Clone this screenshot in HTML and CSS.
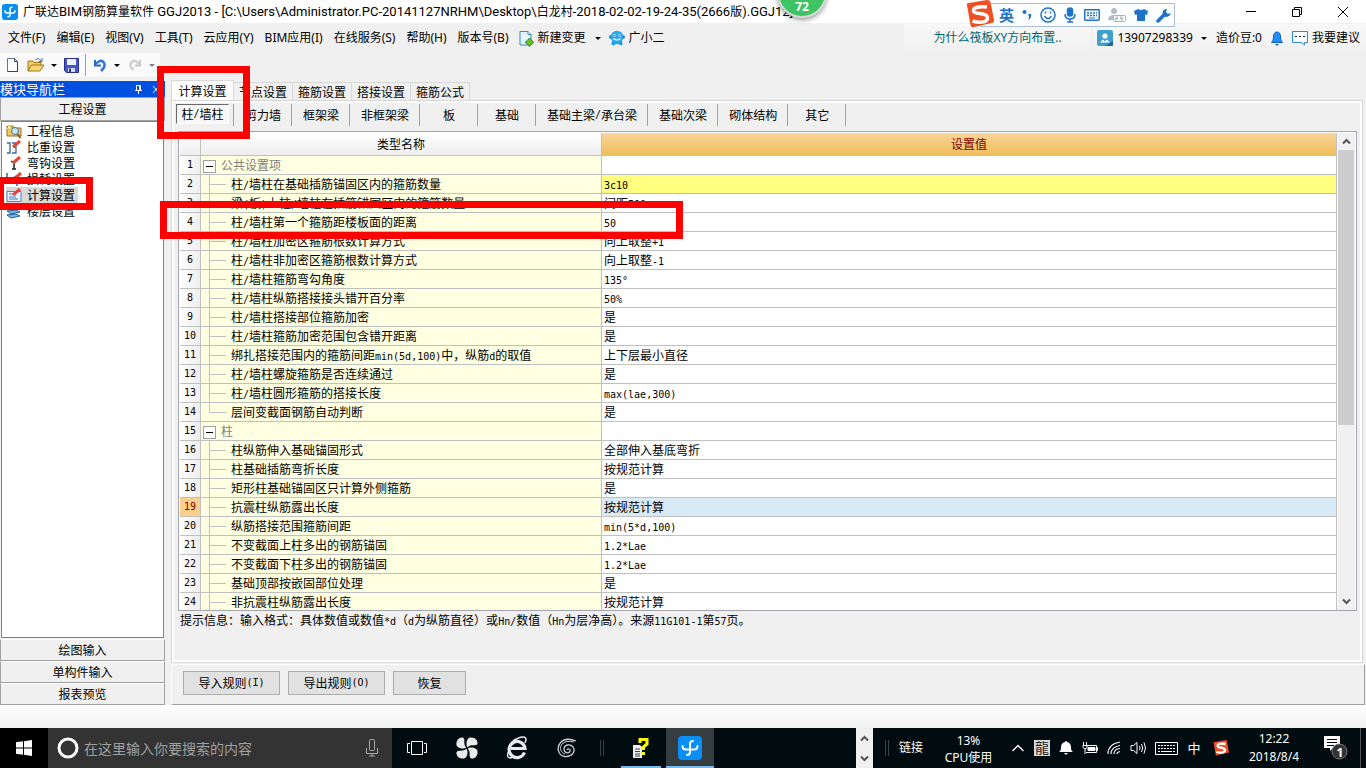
FILE: index.html
```html
<!DOCTYPE html>
<html lang="zh-CN">
<head>
<meta charset="utf-8">
<title>广联达BIM钢筋算量软件 GGJ2013</title>
<link rel="stylesheet" href="styles.css">
</head>
<body>
<header class="titlebar">
  <svg class="app-logo" width="16" height="16" viewBox="0 0 24 24"><rect width="24" height="24" rx="4" fill="#0a8ff0"/><path d="M15 5q-3 0-3 3v8q0 3-3 3M4.500 10q0 3.500 3.500 3.500h8q3.500 0 3.500-3.500" fill="none" stroke="#fff" stroke-width="2.200" stroke-linecap="round"/></svg>
  <h1 class="title-text">广联达<span>BIM</span>钢筋算量软件<span> GGJ2013 - [C:\Users\Administrator.PC-20141127NRHM\Desktop\</span>白龙村<span>-2018-02-02-19-24-35(2666</span>版<span>).GGJ12]</span></h1>
  <div class="window-buttons">
    <button aria-label="最小化"><svg width="12" height="12"><path d="M1 5.500h10" stroke="#000"/></svg></button>
    <button aria-label="还原"><svg width="12" height="12" fill="none" stroke="#000"><path d="M1.500 3.500h7v7h-7zM3.500 3.500v-2h7v7h-2"/></svg></button>
    <button aria-label="关闭"><svg width="12" height="12"><path d="M1 1l10 10M11 1L1 11" stroke="#000"/></svg></button>
  </div>
</header>

<div class="menubar">
  <nav class="menus">
    <button>文件(F)</button><button>编辑(E)</button><button>视图(V)</button><button>工具(T)</button><button>云应用(Y)</button><button>BIM应用(I)</button><button>在线服务(S)</button><button>帮助(H)</button><button>版本号(B)</button>
  </nav>
  <button class="menu-extra change"><svg width="15" height="17" viewBox="0 0 15 17"><path d="M1 1.500h8l3 3V15H1z" fill="#e4f2fc" stroke="#4287b5"/><path d="M9 1.500v3h3" fill="#fff" stroke="#4287b5"/><path d="M10.500 8l2 2.300 2.300 2-2.300 2-2 2.300-2-2.300-2.300-2 2.300-2z" fill="#63c22c" stroke="#2e8b16"/></svg>新建变更<i class="caret"></i></button>
  <button class="menu-extra"><svg width="16" height="16" viewBox="0 0 16 16"><circle cx="1.800" cy="7" r="1.800" fill="#1479bd"/><circle cx="14.200" cy="7" r="1.800" fill="#1479bd"/><path d="M3 10l-.5 5h3l1-1h3l1 1h3l-.5-5z" fill="#189be0"/><circle cx="8" cy="7" r="6.300" fill="#27a9ef"/><circle cx="5.700" cy="5.500" r="1.300" fill="#fff"/><circle cx="10.300" cy="5.500" r="1.300" fill="#fff"/><circle cx="5.900" cy="5.600" r=".6"/><circle cx="10.100" cy="5.600" r=".6"/><path d="M4.500 8.500q3.500 3 7 0" fill="none" stroke="#fff" stroke-width="1.200"/></svg>广小二</button>
  <a class="tip-link" href="#">为什么筏板XY方向布置..</a>
  <div class="account">
    <svg width="16" height="16" viewBox="0 0 16 16"><rect width="16" height="16" rx="2" fill="#3f9fcf"/><path d="M8 16l8-5v5z" fill="#24688e"/><circle cx="8" cy="6" r="2.600" fill="#fff"/><path d="M3 12.500l3-3 2 2 2-2 3 3z" fill="#fff"/></svg>
    <button class="phone">13907298339<i class="caret"></i></button>
    <span class="beans">造价豆:0</span>
    <button aria-label="通知" class="bell"><svg width="12" height="15" viewBox="0 0 12 15"><path d="M6 1C3.500 1 2.500 3 2.500 6c0 3-1 4-2 5.500h11C10.500 10 9.500 9 9.500 6 9.500 3 8.500 1 6 1z" fill="#1e90ff" stroke="#1460c0"/><path d="M4 13h4l-2 2z" fill="#1460c0"/></svg></button>
    <button class="suggest"><svg width="16" height="16" viewBox="0 0 16 16" fill="none" stroke="#2f86d8"><path d="M.5 1.500h15v11h-3v2.500l-3-2.500h-9z" fill="#f8fcff"/><path d="M3 6.500h2M7 6.500h2M11 6.500h2" stroke="#123"/></svg>我要建议</button>
  </div>
</div>

<div class="toolbar">
  <button aria-label="新建"><svg width="14" height="16" viewBox="0 0 14 16"><path d="M1.500 1.500h7l3 3v10h-10z" fill="#fdfdff" stroke="#60758c"/><path d="M8.500 1.500v3h3M11.500 5v9.500h-10" fill="none" stroke="#2d4562"/></svg></button>
  <button aria-label="打开" class="open"><svg width="18" height="16" viewBox="0 0 18 16"><path d="M1 14V4h5l1 1.500h7V8" fill="#f0cb62" stroke="#a4771d"/><path d="M1 14L4.500 8H17l-4 6z" fill="#f8d772" stroke="#a4771d"/><path d="M8 3q4-3 6 1m1-3v3.500h-3.500" fill="none" stroke="#47719e"/></svg><i class="caret"></i></button>
  <button aria-label="保存" class="save"><svg width="15" height="15" viewBox="0 0 15 15"><path d="M.5.5h14v14h-12l-2-2z" fill="#4656c7" stroke="#26328a"/><path d="M3 1h9v6H3z" fill="#eaf2ff"/><path d="M4 10h7v4H4z" fill="#d6d8e5"/><path d="M5 10.500h2V14H5z" fill="#29357f"/></svg></button>
  <button aria-label="撤销" class="undo"><svg width="14" height="15" viewBox="0 0 14 15"><path d="M2 2v5.500h6" fill="none" stroke="#2868bd" stroke-width="2"/><path d="M3 6q4-5 7.500-2 3 4-2.500 9" fill="none" stroke="#3478d2" stroke-width="2.500"/></svg><i class="caret"></i></button>
  <button aria-label="重做" class="redo" disabled><svg width="14" height="15" viewBox="0 0 14 15"><path d="M12 2v5.500H7" fill="none" stroke="#c5c8cb" stroke-width="2"/><path d="M11 6Q7 1 3.500 4q-3 4 2 8" fill="none" stroke="#cfd1d4" stroke-width="2.500"/></svg><i class="caret"></i></button>
</div>

<div class="workspace">
  <aside class="sidebar">
    <div class="side-title"><span>模块导航栏</span>
      <button aria-label="固定"><svg width="9" height="11" fill="none" stroke="#fff"><path d="M2.500 6V1.500h4V6M5.500 1v5M1 6.500h7M4.500 7v3"/></svg></button>
      <button aria-label="关闭"><svg width="8" height="9" stroke="#fff"><path d="M1 1l6 7M7 1L1 8"/></svg></button>
    </div>
    <button class="side-tab">工程设置</button>
    <ul class="side-list">
      <li><button><svg width="16" height="15" viewBox="0 0 16 15"><path d="M1 2h6v2h8v8H1z" fill="#edc75f" stroke="#94702a"/><circle cx="9" cy="7" r="3.500" fill="#c4e5fa" stroke="#51708b"/><path d="M11.500 10l3 4" stroke="#8c5818" stroke-width="2"/><path d="M1 1l4 4M5 1L1 5" stroke="#fff48a"/></svg><span>工程信息</span></button></li>
      <li><button><svg width="16" height="15" viewBox="0 0 16 15" fill="none"><path d="M1 3h3v10H1M6 3h4v4H7h3v6H6" stroke="#3566a5" stroke-width="1.300"/><path d="M7 7l7-6" stroke="#e64532" stroke-width="3"/></svg><span>比重设置</span></button></li>
      <li><button><svg width="16" height="15" viewBox="0 0 16 15" fill="none"><path d="M6 13h4M8 13V7L5 5" stroke="#222" stroke-width="1.500"/><path d="M7 7l7-6" stroke="#e64532" stroke-width="3"/></svg><span>弯钩设置</span></button></li>
      <li><button><svg width="16" height="15" viewBox="0 0 16 15" fill="none"><path d="M1 1v8h3l6-5M11 7v7" stroke="#3566a5" stroke-width="1.500"/><path d="M8 7l7-6" stroke="#e64532" stroke-width="3"/></svg><span>损耗设置</span></button></li>
      <li class="selected"><button><svg width="16" height="15" viewBox="0 0 16 15" fill="none"><path d="M1 3.500h14v10H1z" fill="#e8f2ff" stroke="#5a83b7"/><path d="M3 6h3M3 9h7M3 11h9" stroke="#4778bc"/><path d="M7 7l7-6" stroke="#e64532" stroke-width="3"/></svg><span>计算设置</span></button></li>
      <li><button><svg width="16" height="15" viewBox="0 0 16 15" fill="#78b8e6" stroke="#235f8f"><path d="M1 3l9-1 4 2-9 2zM1 7l9-1 4 2-9 2zM1 11l9-1 4 2-9 2z"/></svg><span>楼层设置</span></button></li>
    </ul>
    <button class="side-tab">绘图输入</button>
    <button class="side-tab">单构件输入</button>
    <button class="side-tab">报表预览</button>
  </aside>

  <main class="content">
    <div class="tabs" role="tablist">
      <button role="tab" class="active" aria-selected="true">计算设置</button><button role="tab">节点设置</button><button role="tab">箍筋设置</button><button role="tab">搭接设置</button><button role="tab">箍筋公式</button>
    </div>
    <section class="page">
      <div class="subtabs">
        <div><button class="pressed">柱<span class="hw">/</span>墙柱</button></div><div><button>剪力墙</button></div><div><button>框架梁</button></div><div><button>非框架梁</button></div><div><button>板</button></div><div><button>基础</button></div><div><button>基础主梁<span class="hw">/</span>承台梁</button></div><div><button>基础次梁</button></div><div><button>砌体结构</button></div><div><button>其它</button></div>
      </div>
      <div class="grid">
        <div class="grid-view">
          <table>
            <colgroup><col class="c-num"><col class="c-name"><col></colgroup>
            <thead><tr><th></th><th>类型名称</th><th class="hot">设置值</th></tr></thead>
            <tbody>
              <tr><th>1</th><td class="group"><button aria-label="折叠"></button>公共设置项</td><td></td></tr>
              <tr class="changed"><th>2</th><td>柱<span class="hw">/</span>墙柱在基础插筋锚固区内的箍筋数量</td><td><span class="hw">3c10</span></td></tr>
              <tr><th>3</th><td>梁<span class="hw">(</span>板<span class="hw">)</span>上柱<span class="hw">/</span>墙柱在插筋锚固区内的箍筋数量</td><td>间距<span class="hw">500</span></td></tr>
              <tr><th>4</th><td>柱<span class="hw">/</span>墙柱第一个箍筋距楼板面的距离</td><td><span class="hw">50</span></td></tr>
              <tr><th>5</th><td>柱<span class="hw">/</span>墙柱加密区箍筋根数计算方式</td><td>向上取整<span class="hw">+1</span></td></tr>
              <tr><th>6</th><td>柱<span class="hw">/</span>墙柱非加密区箍筋根数计算方式</td><td>向上取整<span class="hw">-1</span></td></tr>
              <tr><th>7</th><td>柱<span class="hw">/</span>墙柱箍筋弯勾角度</td><td><span class="hw">135°</span></td></tr>
              <tr><th>8</th><td>柱<span class="hw">/</span>墙柱纵筋搭接接头错开百分率</td><td><span class="hw">50%</span></td></tr>
              <tr><th>9</th><td>柱<span class="hw">/</span>墙柱搭接部位箍筋加密</td><td>是</td></tr>
              <tr><th>10</th><td>柱<span class="hw">/</span>墙柱箍筋加密范围包含错开距离</td><td>是</td></tr>
              <tr><th>11</th><td>绑扎搭接范围内的箍筋间距<span class="hw">min(5d,100)</span>中，纵筋<span class="hw">d</span>的取值</td><td>上下层最小直径</td></tr>
              <tr><th>12</th><td>柱<span class="hw">/</span>墙柱螺旋箍筋是否连续通过</td><td>是</td></tr>
              <tr><th>13</th><td>柱<span class="hw">/</span>墙柱圆形箍筋的搭接长度</td><td><span class="hw">max(lae,300)</span></td></tr>
              <tr><th>14</th><td class="last">层间变截面钢筋自动判断</td><td>是</td></tr>
              <tr><th>15</th><td class="group"><button aria-label="折叠"></button>柱</td><td></td></tr>
              <tr><th>16</th><td>柱纵筋伸入基础锚固形式</td><td>全部伸入基底弯折</td></tr>
              <tr><th>17</th><td>柱基础插筋弯折长度</td><td>按规范计算</td></tr>
              <tr><th>18</th><td>矩形柱基础锚固区只计算外侧箍筋</td><td>是</td></tr>
              <tr class="current"><th>19</th><td>抗震柱纵筋露出长度</td><td>按规范计算</td></tr>
              <tr><th>20</th><td>纵筋搭接范围箍筋间距</td><td><span class="hw">min(5*d,100)</span></td></tr>
              <tr><th>21</th><td>不变截面上柱多出的钢筋锚固</td><td><span class="hw">1.2*Lae</span></td></tr>
              <tr><th>22</th><td>不变截面下柱多出的钢筋锚固</td><td><span class="hw">1.2*Lae</span></td></tr>
              <tr><th>23</th><td>基础顶部按嵌固部位处理</td><td>是</td></tr>
              <tr><th>24</th><td>非抗震柱纵筋露出长度</td><td>按规范计算</td></tr>
            </tbody>
          </table>
        </div>
        <div class="scrollbar">
          <button aria-label="向上滚动"><svg width="9" height="7"><path d="M1 5.500l3.500-3.500 3.500 3.500" fill="none" stroke="#555" stroke-width="2"/></svg></button>
          <div class="track"><div class="thumb"></div></div>
          <button aria-label="向下滚动"><svg width="9" height="7"><path d="M1 1.500l3.500 3.500 3.500-3.500" fill="none" stroke="#555" stroke-width="2"/></svg></button>
        </div>
      </div>
      <p class="hint">提示信息：输入格式：具体数值或数值<span class="hw">*d</span>（<span class="hw">d</span>为纵筋直径）或<span class="hw">Hn/</span>数值（<span class="hw">Hn</span>为层净高）。来源<span class="hw">11G101-1</span>第<span class="hw">57</span>页。</p>
    </section>
    <div class="actions">
      <button>导入规则<span class="hw">(I)</span></button><button>导出规则<span class="hw">(O)</span></button><button class="small">恢复</button>
    </div>
  </main>
</div>
<div class="statusbar"></div>

<footer class="taskbar">
  <button class="start" aria-label="开始"><svg width="16" height="16" fill="#fff"><path d="M0 2.300l7-1v6.200H0zM8 1.200L16 0v7.500H8zM0 8.500h7v6.200l-7-1zM8 8.500h8V16l-8-1.200z"/></svg></button>
  <label class="search">
    <svg width="22" height="22"><circle cx="11" cy="11" r="9" fill="none" stroke="#fff" stroke-width="3"/></svg>
    <input type="text" aria-label="搜索" placeholder="在这里输入你要搜索的内容">
    <svg width="12" height="18" fill="none" stroke="#aaa"><rect x="3.500" y=".5" width="5" height="11" rx="1"/><path d="M.5 9v5.500h11V9M6 14.500V17M3 17h6"/></svg>
  </label>
  <div class="apps">
    <button aria-label="任务视图"><svg width="20" height="16" fill="none" stroke="#fff"><path d="M4.500 1.500h11v13h-11zM3 3.500H.5v9H3M17 3.500h2.500v9H17"/></svg></button>
    <button aria-label="风车"><svg width="22" height="22" viewBox="-11 -11 22 22" fill="#e8eced"><path d="M.5-.8C-1.500-3-.5-10 3-10.500 8-11 11-8 10.500-4 8-1 5-4.500.5-.8z"/><path d="M.5-.8C-1.500-3-.5-10 3-10.500 8-11 11-8 10.500-4 8-1 5-4.500.5-.8z" transform="rotate(90)"/><path d="M.5-.8C-1.500-3-.5-10 3-10.500 8-11 11-8 10.500-4 8-1 5-4.500.5-.8z" transform="rotate(180)"/><path d="M.5-.8C-1.500-3-.5-10 3-10.500 8-11 11-8 10.500-4 8-1 5-4.500.5-.8z" transform="rotate(270)"/></svg></button>
    <button aria-label="浏览器"><svg width="22" height="24" viewBox="0 0 22 24" fill="none" stroke="#e8eced"><path d="M18.500 16.500A8 8 0 1 1 19 12.500H5" stroke-width="3.200"/><path d="M5 7C11 1 19-1 20 3q0 2-1 4M4 13C0 19 1 24 7 21" stroke-width="1.500"/></svg></button>
    <button aria-label="应用"><svg width="20" height="20" viewBox="0 0 20 20" fill="none" stroke="#c8cfd1"><path d="M19 3Q9-1 4 4C-1 9 1 18 8 18.500c7 .5 11-5 8-9.500-3-4-9-2-9 2s5 5 6 2c.5-2-2-3-3-1" stroke-width="1.300"/><path d="M17 4Q9 2 5 6c-3 4-1 9 3 10"/></svg></button>
  </div>
  <i class="handle"></i>
  <button class="task running" aria-label="帮助"><svg width="18" height="22" viewBox="0 0 18 22"><path d="M8 6V2.500h7V7l-3.500 3v3" fill="none" stroke="#ff0" stroke-width="3"/><path d="M10 15h3v3h-3z" fill="#ff0"/><path d="M1 8h7l2 2v11H1z" fill="#eee"/><path d="M3 12h5M3 14.500h5M3 17h5M3 19h5" stroke="#444"/></svg></button>
  <button class="task active" aria-label="广联达"><svg width="24" height="24" viewBox="0 0 24 24"><rect width="24" height="24" rx="4" fill="#0a8ff8"/><path d="M15 5q-3 0-3 3v8q0 3-3 3M4.500 10q0 3.500 3.500 3.500h8q3.500 0 3.500-3.500" fill="none" stroke="#fff" stroke-width="2" stroke-linecap="round"/></svg></button>
  <div class="task-scroll"><button aria-label="上"><svg width="9" height="7"><path d="M1 5.500l3.500-3.500 3.500 3.500" fill="none" stroke="#555" stroke-width="2"/></svg></button><button aria-label="下"><svg width="9" height="7"><path d="M1 1.500l3.500 3.500 3.500-3.500" fill="none" stroke="#555" stroke-width="2"/></svg></button></div>
  <i class="handle right"></i>
  <span class="links">链接</span>
  <div class="cpu">13%<br>CPU使用</div>
  <div class="tray">
    <button aria-label="展开"><svg width="12" height="8"><path d="M.5 7L6 1.500 11.500 7" fill="none" stroke="#fff" stroke-width="1.300"/></svg></button>
    <button><span class="dragon">龍</span></button>
    <button aria-label="提醒"><svg width="14" height="14" fill="#fff"><path d="M7 0a1 1 0 0 1 1 1c3 .5 4 3 4 5 0 3 .5 4 2 5H0c1.500-1 2-2 2-5 0-2 1-4.500 4-5a1 1 0 0 1 1-1zM5 12h4l-2 2z"/></svg></button>
    <button aria-label="电源"><svg width="16" height="13" fill="none" stroke="#fff"><path d="M5 3.500h9.500v7H4M14.500 5.500h1v3h-1M1.500 0v3M4.500 0v3M1 3.500h4v2L3 7 1 5.500zM3 7v5"/><path d="M6 5.500h7v3H6z" fill="#fff"/></svg></button>
    <button aria-label="网络"><svg width="14" height="14" fill="none" stroke="#e8eced"><path d="M1 13Q1 3 13 1M4 13Q4 6 13 4.500M7 13q0-5 6-5.500M10 13q0-2 3-2.500" stroke-width="1.200"/></svg></button>
    <button aria-label="音量"><svg width="17" height="14" fill="none" stroke="#fff"><path d="M1 4.500h2.500L7 1.500v11L3.500 9.500H1zM9.500 5q1 2 0 4M11.500 3q2.500 4 0 8M14 1.500q3 5.500 0 11"/></svg></button>
    <button aria-label="键盘" class="wide"><svg width="23" height="13" fill="none" stroke="#fff"><path d="M.5.500h22v12H.5z"/><path d="M3 3.500h17M3 6.500h17" stroke-dasharray="2 1"/><path d="M3 9.500h2M6 9.500h11M18 9.500h2"/></svg></button>
    <button class="ime">中</button>
    <button aria-label="搜狗" class="sogou"><svg width="16" height="16" viewBox="0 0 28 28"><path d="M1 4L24 0l4 22-23 5z" fill="#f04e23"/><path d="M22 7Q8 5 8 10c0 5 13 2 13 8 0 5-9 5-15 3" fill="none" stroke="#fff" stroke-width="4"/></svg></button>
  </div>
  <div class="clock">12:22<br>2018/8/4</div>
  <button class="notify" aria-label="通知"><svg width="24" height="26" viewBox="0 0 24 26"><path d="M0 1h16v12H9l-3 3v-3H0z" fill="#fff"/><path d="M3 4.500h10M3 7.500h10M3 10.500h7" stroke="#000"/><circle cx="15.500" cy="16.500" r="7.500" fill="#333" stroke="#777"/></svg><b>1</b></button>
</footer>

<div class="speed-ball">72</div>
<div class="ime-bar">
  <svg class="ime-logo" width="28" height="28" viewBox="0 0 28 28"><path d="M1 5Q0 3 3 3L21 0q3 0 3.500 2L28 20q0 3-2 3L8 27q-3 1-3.500-2z" fill="#f04e23"/><path d="M21 7Q7 6 7.500 11c.5 4 14 1 14 7 0 5-9 5-15 3" fill="none" stroke="#fff" stroke-width="3.500"/></svg>
  <b>英</b>
  <svg width="10" height="14" fill="#1e73c8"><circle cx="2.500" cy="4" r="2"/><path d="M6 6h3q1 4-3 6 2-3 0-6z"/></svg>
  <svg width="16" height="16" fill="none" stroke="#1e73c8" stroke-width="1.500"><circle cx="8" cy="8" r="7"/><path d="M4.500 9q3.500 5 7 0M5.500 4.500v2M10.500 4.500v2"/></svg>
  <svg width="12" height="16" fill="none" stroke="#1e73c8" stroke-width="1.500"><rect x="3.500" y="1" width="5" height="8" rx="2.500" fill="#1e73c8"/><path d="M1 7q0 5 5 5t5-5M6 12v3M3 15h6"/></svg>
  <svg width="16" height="12" fill="none" stroke="#1e73c8"><rect x=".7" y=".7" width="14.500" height="10.500" rx="1" stroke-width="1.500"/><path d="M3 4h10M3 6.500h10" stroke-width="1.500" stroke-dasharray="2 1"/><path d="M5 9h6"/></svg>
  <svg width="18" height="16" fill="#b3bccb"><circle cx="6" cy="4" r="3"/><path d="M0 13q0-5 6-5l4 1v4z"/><rect x="5.500" y="8.500" width="12" height="6" rx="1" fill="#fff" stroke="#a7b2c3"/><path d="M7.500 10h2v1.500h-2v1.500h2M14.500 10h-2v1.500h2v1.500h-2" fill="none" stroke="#a7b2c3"/></svg>
  <svg width="14" height="14" fill="#1e73c8"><path d="M4 1q3 2 6 0l4 2-1 4-2-.5V13H3V6.500L1 7 0 3z"/></svg>
  <svg width="15" height="15"><path d="M2 13l7-7" stroke="#1e73c8" stroke-width="3.500" stroke-linecap="round"/><path d="M11 1a4 4 0 1 0 3.500 4l-2.500 1-2-2z" fill="#1e73c8"/></svg>
</div>
<div class="mark mark-tab"></div>
<div class="mark mark-nav"></div>
<div class="mark mark-row"></div>
</body>
</html>
```
FILE: styles.css
```css
* { box-sizing: border-box; }
body {
  margin: 0;
  height: 100vh;
  display: flex;
  flex-direction: column;
  overflow: hidden;
  background: #f0f0f0;
  color: #000;
  font: 12px/16px "Noto Sans", "Noto Sans CJK SC", sans-serif;
  white-space: nowrap;
}
button {
  margin: 0;
  padding: 0;
  border: 0;
  background: none;
  color: inherit;
  font: inherit;
  display: inline-flex;
  align-items: center;
  justify-content: center;
}
svg { display: block; flex: none; }
a { color: inherit; text-decoration: none; }
.hw { font-family: "DejaVu Sans Mono", monospace; font-size: 10px; line-height: 10px; }
.caret {
  display: inline-block;
  border: 3px solid transparent;
  border-top-color: #000;
  border-bottom: 0;
}

/* title bar */
.titlebar { display: flex; align-items: center; flex: none; height: 23px; padding-left: 2px; background: #fff; }
.title-text { flex: 1; margin: 0 0 0 5px; font-size: 12px; font-weight: 400; overflow: hidden; }
.title-text span { font-family: Roboto, sans-serif; font-size: 13px; white-space: pre; }
.window-buttons { display: flex; }
.window-buttons button { width: 46px; height: 20px; }

/* menus */
.menubar { display: flex; align-items: center; flex: none; height: 30px; padding-left: 8px; }
.menus { display: flex; gap: 11px; }
.menu-extra { gap: 4px; margin-left: 10px; }
.menu-extra .caret { margin-left: 5px; }
.menu-extra.change + .menu-extra { margin-left: 8px; }
.tip-link {
  width: 187px; height: 28px; line-height: 28px; margin-left: auto; padding-left: 29px;
  background: linear-gradient(#f8f8f8, #f0f0f0); color: #00646c;
}
.account {
  display: flex; align-items: center; height: 28px; margin-left: 2px; padding: 0 6px 0 4px;
  background: linear-gradient(#f8f8f8, #f0f0f0);
}
.phone { margin-left: 4px; gap: 8px; }
.beans { margin-left: 9px; }
.bell { margin-left: 9px; }
.suggest { margin-left: 9px; gap: 4px; }

/* toolbar */
.toolbar { display: flex; align-items: center; flex: none; width: 160px; height: 24px; padding-left: 6px; background: #fafafa; }
.toolbar button { gap: 6px; height: 22px; }
.toolbar .open { margin-left: 7px; }
.toolbar .save { margin-left: 7px; }
.toolbar .undo { margin-left: 6px; padding-left: 7px; border-left: 1px solid #a0a0a0; gap: 7px; }
.toolbar .redo { margin-left: 8px; gap: 7px; }
.redo .caret { border-top-color: #808080; }

.workspace { flex: 1; display: flex; min-height: 0; padding-top: 3px; font-family: "Noto Sans CJK SC", sans-serif; }

/* navigation */
.sidebar { flex: none; width: 165px; display: flex; flex-direction: column; padding-top: 1px; }
.side-title { display: flex; align-items: center; height: 16px; background: #0050e0; color: #fff; padding-right: 5px; gap: 9px; }
.side-title span { flex: 1; font-size: 13px; line-height: 16px; }
.side-tab {
  flex: none; height: 22px; border: 1px solid #a0a0a0; border-top-color: #fff; background: #f0f0f0;
}
.side-title + .side-tab { height: 24px; border-top-color: #a0a0a0; }
.side-list {
  flex: 1; min-height: 0; margin: 0 1px 1px; padding: 1px 0 0 4px; list-style: none;
  background: #fff; border: 1px solid #808088;
}
.side-list li { height: 16px; }
.side-list button { gap: 4px; height: 16px; }
.side-list span { padding: 0 3px 0 1px; height: 16px; line-height: 16px; }
.selected button { background: #d9d9d9; }

/* content */
.content { flex: 1; min-width: 0; display: flex; flex-direction: column; padding: 0 1px 0 6px; }
.tabs { display: flex; align-items: flex-end; height: 20px; flex: none; }
.tabs button { height: 18px; width: 59px; border: 1px solid #d9d9d9; border-left: 0; border-bottom: 0; }
.tabs .active { height: 20px; width: 63px; background: #fff; border-left: 1px solid #d9d9d9; }
.page {
  flex: 1; min-height: 0; display: flex; flex-direction: column; margin-right: 2px; padding: 1px 5px 0 2px;
  border: 1px solid #d9d9d9; box-shadow: inset 0 0 0 2px #fff;
}
.subtabs { display: flex; flex: none; height: 27px; margin-top: 2px; padding: 0 0 5px 2px; }
.subtabs div { display: flex; min-width: 58px; border-right: 1px solid #a0a0a0; }
.subtabs button { flex: 1; padding: 0 10px 0 11px; }
.subtabs .pressed { flex: none; width: 53px; height: 20px; padding: 0; background: #f8f8f8; border: 1px solid #696969; border-right-color: #fff; border-bottom-color: #fff; }
.grid { flex: 1; min-height: 0; display: flex; gap: 1px; margin: 0 0 0 4px; padding: 1px 1px 0; border: 1px solid #a5a5b0; background: #fff; }
.grid-view { flex: 1; min-width: 0; overflow: hidden; }
.grid table { width: 100%; table-layout: fixed; border-collapse: separate; border-spacing: 0; }
.c-num { width: 21px; }
.c-name { width: 401px; }
.grid th, .grid td { height: 19px; padding: 0 0 0 2px; border: solid #c0c0c0; border-width: 0 1px 1px 0; font-weight: 400; line-height: 18px; text-align: left; overflow: hidden; }
.grid th { padding: 0; text-align: center; background: #f5f5f5; }
.grid tbody th { font: 10px/18px "DejaVu Sans Mono", monospace; background: linear-gradient(90deg, #fff, #eee); }
.grid thead th { height: 23px; line-height: 22px; background: linear-gradient(#fff, #eee); }
.grid thead .hot { background: linear-gradient(#f9d59b, #f0be5c); color: #800000; }
.grid td:nth-child(2) {
  padding-left: 30px;
  background:
    linear-gradient(#c0c0c0, #c0c0c0) 8px 0 / 1px 100% no-repeat,
    linear-gradient(#c0c0c0, #c0c0c0) 9px 9px / 16px 1px no-repeat,
    #ffffe1;
}
.grid td.last:nth-child(2) {
  background:
    linear-gradient(#c0c0c0, #c0c0c0) 8px 0 / 1px 10px no-repeat,
    linear-gradient(#c0c0c0, #c0c0c0) 9px 9px / 16px 1px no-repeat,
    #ffffe1;
}
.grid td.group:nth-child(2) { padding-left: 2px; background: #ffffe1; color: #808080; }
.group button {
  width: 13px; height: 13px; margin-right: 5px; vertical-align: -2px; border: 1px solid #a0a0a0;
  background: linear-gradient(#000, #000) center / 7px 1px no-repeat #fff;
}
.changed td:last-child { background: #ffff80; }
.current td:last-child { background: #d9eaf7; }
.grid .current th { background: #fbd08d; color: #800000; }
.scrollbar { flex: none; width: 17px; display: flex; flex-direction: column; background: #f0f0f0; }
.scrollbar button { height: 17px; }
.track { flex: 1; }
.thumb { height: 62%; margin-right: 1px; background: #cdcdcd; }
.hint { flex: none; height: 51px; margin: 0; padding: 1px 0 0 6px; }
.actions {
  display: flex; gap: 8px; flex: none; height: 41px; margin-top: 1px; padding: 6px 0 0 11px;
  border: 1px solid #a0a0a0; border-left-color: #fff; border-top-color: #fff;
}
.actions button { width: 97px; height: 24px; background: #e1e1e1; border: 1px solid #adadad; }
.actions .small { width: 73px; }
.statusbar { flex: none; height: 23px; background: linear-gradient(#fff, #f0f0f0); }

/* taskbar */
.taskbar { display: flex; flex: none; height: 40px; background: #000c10; color: #fff; }
.start { width: 48px; background: #000; }
.search { display: flex; align-items: center; width: 344px; padding: 0 14px 0 9px; background: #333; }
.search input { flex: 1; min-width: 0; padding: 0 0 0 5px; border: 0; outline: 0; background: none; color: #fff; font: 14px/20px "Noto Sans CJK SC", sans-serif; }
.search input::placeholder { color: #a0a0a0; opacity: 1; }
.apps { display: flex; padding-right: 8px; }
.apps button { width: 50px; }
.handle { width: 4px; height: 16px; margin: 12px 0; border: solid #3c4447; border-width: 0 1px; }
.task { width: 40px; border-bottom: 2px solid #76b9ed; padding-top: 2px; }
.running { margin-left: 17px; }
.task.active { width: 48px; margin-left: 5px; background: #343d40; }
.task-scroll { display: flex; flex-direction: column; justify-content: space-around; width: 17px; margin-left: auto; background: #f0f0f0; }
.handle.right { margin-left: 12px; }
.links { margin-left: 10px; line-height: 40px; }
.cpu { width: 83px; padding: 4px 0 0 8px; text-align: center; line-height: 17px; }
.tray { display: flex; }
.tray button { width: 24px; }
.tray .wide { width: 32px; }
.dragon { width: 16px; height: 16px; line-height: 16px; background: #ddd; color: #222; font-size: 14px; }
.ime { font-size: 13px; }
.tray .sogou { width: 30px; }
.clock { width: 76px; padding-top: 2px; text-align: center; line-height: 18px; }
.notify { position: relative; width: 49px; margin-right: 5px; border-right: 1px solid #555; }
.notify b { position: absolute; left: 20px; top: 17px; width: 16px; text-align: center; }

/* floating items */
.speed-ball {
  position: absolute; left: 777px; top: -32px; width: 50px; height: 50px; padding-top: 29px;
  border: 2px solid #d4dcd6; border-radius: 50%; background: #3fc463; color: #fff;
  font-weight: 700; text-align: center; box-shadow: 0 2px 5px rgba(0, 0, 0, .4);
}
.ime-bar {
  position: absolute; right: 191px; top: 3px; height: 24px; padding: 0 3px 0 18px;
  display: flex; align-items: center; gap: 8px; border: 1px solid #a9bfd8; background: #fdfeff;
  color: #1e73c8; font-size: 15px;
}
.ime-logo { position: absolute; left: -15px; top: -4px; }
.mark { position: absolute; border: 7px solid #f00; pointer-events: none; }
.mark-tab { left: 157px; top: 66px; width: 93px; height: 73px; }
.mark-nav { left: -3px; top: 177px; width: 96px; height: 33px; }
.mark-row { left: 160px; top: 201px; width: 523px; height: 38px; }
```
